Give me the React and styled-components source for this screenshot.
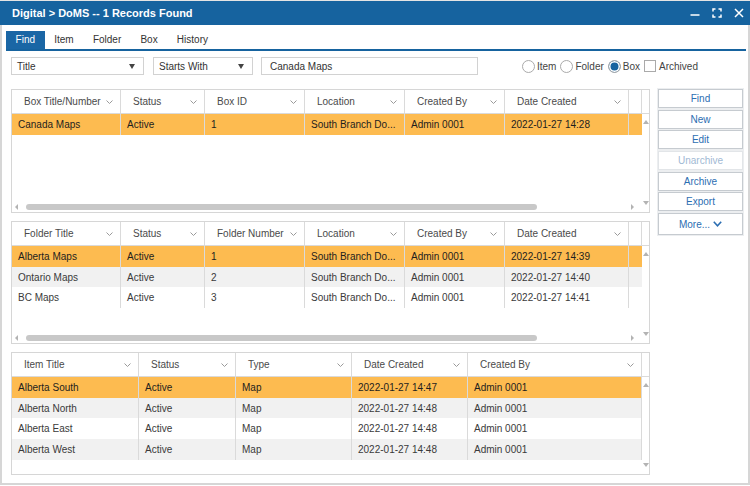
import React from "react";
import styled, { createGlobalStyle } from "styled-components";

const colors = {
	blue: "#16639f",
	tabBlue: "#1a66a5",
	border: "#d6d6d6",
	gridLine: "#dadada",
	highlight: "#fdbb50",
	alt: "#f1f1f1",
	link: "#2c6eb2",
};

const GlobalStyle = createGlobalStyle`
	html, body {
		margin: 0;
		padding: 0;
		background: #fff;
	}
	body {
		font-family: "Liberation Sans", Arial, sans-serif;
		font-size: 10px;
		color: #333;
	}
	* {
		box-sizing: border-box;
	}
`;

const Window = styled.div`
	width: 750px;
	height: 485px;
	display: flex;
	flex-direction: column;
	background: #fff;
`;

const TitleBar = styled.header`
	height: 25px;
	flex: none;
	display: flex;
	align-items: center;
	justify-content: space-between;
	background: ${colors.blue};
	border-top: 1px solid #e4e4e4;
	padding: 0 6px 0 12px;
	color: #fff;
	font-size: 11px;
	font-weight: bold;
`;

const TitleIcons = styled.div`
	display: flex;
	align-items: center;
	gap: 12px;

	svg {
		width: 10px;
		height: 10px;
		stroke: #fff;
		fill: none;
		stroke-width: 1.5;
	}
`;

const Body = styled.div`
	flex: 1;
	display: flex;
	flex-direction: column;
	border: 2px solid ${colors.border};
	border-top: none;
	padding: 0 2px;
`;

const TabBar = styled.nav`
	display: flex;
	margin: 6px 0 0 2px;
	border-bottom: 2px solid ${colors.blue};
`;

const Tab = styled.div`
	height: 18px;
	line-height: 18px;
	padding: 0 9.6px;
	background: ${(p) => (p.$active ? colors.tabBlue : "transparent")};
	color: ${(p) => (p.$active ? "#fff" : "#333")};
`;

const FilterRow = styled.div`
	display: flex;
	align-items: center;
	height: 18px;
	margin: 6px 0 0 7px;
`;

const Select = styled.div`
	width: ${(p) => p.$width}px;
	height: 18px;
	margin-right: ${(p) => p.$gap}px;
	display: flex;
	align-items: center;
	justify-content: space-between;
	padding: 0 8px 0 5px;
	border: 1px solid #d2d2d2;
	color: #333;
`;

const Caret = styled.span`
	width: 0;
	height: 0;
	border-left: 3.5px solid transparent;
	border-right: 3.5px solid transparent;
	border-top: 5px solid #444;
`;

const TextInput = styled.div`
	width: 217px;
	height: 18px;
	display: flex;
	align-items: center;
	padding-left: 8px;
	border: 1px solid #d2d2d2;
	color: #333;
`;

const Options = styled.div`
	display: flex;
	align-items: center;
	margin-left: 44px;
	color: #444;
`;

const Option = styled.label`
	display: flex;
	align-items: center;
	gap: 2px;
	margin-right: 4px;
`;

const Radio = styled.span`
	width: 13px;
	height: 13px;
	border-radius: 50%;
	border: 1px solid #aaa;
	background: ${(p) => (p.$checked ? colors.blue : "#fff")};
	box-shadow: ${(p) => (p.$checked ? "inset 0 0 0 1.5px #fff" : "none")};
`;

const Checkbox = styled.span`
	width: 12px;
	height: 12px;
	border: 1px solid #aaa;
	background: #fff;
	margin-right: 1px;
`;

const Main = styled.div`
	display: flex;
	gap: 8px;
	margin: 14px 0 0 7px;
`;

const Grids = styled.div`
	width: 639px;
	display: flex;
	flex-direction: column;
	gap: 8px;
`;

const GridBox = styled.div`
	height: ${(p) => p.$height}px;
	display: flex;
	flex-direction: column;
	border: 1px solid ${colors.border};
`;

const HeaderRow = styled.div`
	height: 24px;
	flex: none;
	display: flex;
	border-bottom: 1px solid ${colors.gridLine};
`;

const HeaderCell = styled.div`
	width: ${(p) => p.$width}px;
	flex: none;
	display: flex;
	align-items: center;
	justify-content: space-between;
	padding: 0 7px 0 12px;
	border-right: 1px solid ${colors.gridLine};
	color: #4a4a4a;

	svg {
		width: 7px;
		height: 4px;
		stroke: #9a9a9a;
		fill: none;
	}
`;

const Filler = styled.div`
	width: 13px;
	flex: none;
	border-right: ${(p) => (p.$line ? `1px solid ${colors.gridLine}` : "none")};
`;

const GridMain = styled.div`
	flex: 1;
	display: flex;
	min-height: 0;
`;

const GridLeft = styled.div`
	flex: 1;
	display: flex;
	flex-direction: column;
`;

const Rows = styled.div`
	flex: 1;
	overflow: hidden;
`;

const Row = styled.div`
	height: 20.7px;
	display: flex;
	background: ${(p) => (p.$selected ? colors.highlight : p.$alt ? colors.alt : "#fff")};
	color: ${(p) => (p.$selected ? "#1e1e1e" : "#3a3a3a")};
`;

const Cell = styled.div`
	width: ${(p) => p.$width}px;
	flex: none;
	display: flex;
	align-items: center;
	padding: 0 2px 0 6px;
	border-right: 1px solid ${colors.gridLine};
	white-space: nowrap;
`;

const VScroll = styled.div`
	width: 7px;
	flex: none;
	display: flex;
	flex-direction: column;
	align-items: center;
	justify-content: space-between;
	padding: 6px 0 7px;
`;

const Arrow = styled.span`
	width: 0;
	height: 0;
	${(p) =>
		p.$dir === "up"
			? "border-left: 3px solid transparent; border-right: 3px solid transparent; border-bottom: 4px solid #b3b3b3;"
			: p.$dir === "down"
			? "border-left: 3px solid transparent; border-right: 3px solid transparent; border-top: 4px solid #b3b3b3;"
			: p.$dir === "left"
			? "border-top: 3px solid transparent; border-bottom: 3px solid transparent; border-right: 3px solid #b3b3b3;"
			: "border-top: 3px solid transparent; border-bottom: 3px solid transparent; border-left: 3px solid #b3b3b3;"}
`;

const HScroll = styled.div`
	height: 11px;
	flex: none;
	display: flex;
	align-items: center;
	padding: 0 8px 0 3px;
`;

const Thumb = styled.div`
	width: 511px;
	height: 6px;
	margin: 0 auto 0 8px;
	border-radius: 3px;
	background: #c8c8c8;
`;

const Actions = styled.div`
	width: 85px;
	display: flex;
	flex-direction: column;
	gap: 1.7px;
`;

const ActionButton = styled.button`
	height: ${(p) => (p.$tall ? 22 : 19)}px;
	display: flex;
	align-items: center;
	justify-content: center;
	gap: 3px;
	padding: 0;
	margin: 0;
	background: #fff;
	border: 1px solid ${(p) => (p.disabled ? "#e2e5e8" : "#c6cbd0")};
	box-shadow: 0 0 0 1px #eceef0;
	font-family: inherit;
	font-size: 10px;
	color: ${(p) => (p.disabled ? "#9fb9d4" : colors.link)};

	svg {
		width: 9px;
		height: 6px;
		stroke: ${colors.link};
		stroke-width: 1.6;
		fill: none;
	}
`;

const SortIcon = () => (
	<svg viewBox="0 0 7 4">
		<polyline points="0.5,0.5 3.5,3.5 6.5,0.5" />
	</svg>
);

const GridTable = ({ columns, rows, height, filler, hscroll }) => (
	<GridBox $height={height}>
		<HeaderRow>
			{columns.map((c) => (
				<HeaderCell key={c.title} $width={c.width}>
					<span>{c.title}</span>
					<SortIcon />
				</HeaderCell>
			))}
			{filler && <Filler $line />}
		</HeaderRow>
		<GridMain>
			<GridLeft>
				<Rows>
					{rows.map((r, i) => (
						<Row key={i} $selected={i === 0} $alt={i % 2 === 1}>
							{r.map((v, j) => (
								<Cell key={j} $width={columns[j].width}>
									{v}
								</Cell>
							))}
							{filler && <Filler />}
						</Row>
					))}
				</Rows>
				{hscroll && (
					<HScroll>
						<Arrow $dir="left" />
						<Thumb />
						<Arrow $dir="right" />
					</HScroll>
				)}
			</GridLeft>
			<VScroll>
				<Arrow $dir="up" />
				<Arrow $dir="down" />
			</VScroll>
		</GridMain>
	</GridBox>
);

const LOC = "South Branch Do...";

const boxColumns = [
	{ title: "Box Title/Number", width: 109 },
	{ title: "Status", width: 84 },
	{ title: "Box ID", width: 100 },
	{ title: "Location", width: 100 },
	{ title: "Created By", width: 100 },
	{ title: "Date Created", width: 124 },
];

const boxRows = [["Canada Maps", "Active", "1", LOC, "Admin 0001", "2022-01-27 14:28"]];

const folderColumns = [
	{ title: "Folder Title", width: 109 },
	{ title: "Status", width: 84 },
	{ title: "Folder Number", width: 100 },
	{ title: "Location", width: 100 },
	{ title: "Created By", width: 100 },
	{ title: "Date Created", width: 124 },
];

const folderRows = [
	["Alberta Maps", "Active", "1", LOC, "Admin 0001", "2022-01-27 14:39"],
	["Ontario Maps", "Active", "2", LOC, "Admin 0001", "2022-01-27 14:40"],
	["BC Maps", "Active", "3", LOC, "Admin 0001", "2022-01-27 14:41"],
];

const itemColumns = [
	{ title: "Item Title", width: 127 },
	{ title: "Status", width: 97 },
	{ title: "Type", width: 116 },
	{ title: "Date Created", width: 116 },
	{ title: "Created By", width: 174 },
];

const itemRows = [
	["Alberta South", "Active", "Map", "2022-01-27 14:47", "Admin 0001"],
	["Alberta North", "Active", "Map", "2022-01-27 14:48", "Admin 0001"],
	["Alberta East", "Active", "Map", "2022-01-27 14:48", "Admin 0001"],
	["Alberta West", "Active", "Map", "2022-01-27 14:48", "Admin 0001"],
];

const tabs = ["Find", "Item", "Folder", "Box", "History"];
const actions = ["Find", "New", "Edit", "Unarchive", "Archive", "Export"];

const App = () => {
	return (
		<Window>
			<GlobalStyle />
			<TitleBar>
				<span>Digital &gt; DoMS -- 1 Records Found</span>
				<TitleIcons>
					<svg viewBox="0 0 10 10">
						<path d="M0.5 7h9" />
					</svg>
					<svg viewBox="0 0 10 10">
						<path d="M1 3.5V1h2.5M6.5 1H9v2.5M9 6.5V9H6.5M3.5 9H1V6.5" />
					</svg>
					<svg viewBox="0 0 10 10">
						<path d="M1 1l8 8M9 1L1 9" />
					</svg>
				</TitleIcons>
			</TitleBar>
			<Body>
				<TabBar>
					{tabs.map((t) => (
						<Tab key={t} $active={t === "Find"}>
							{t}
						</Tab>
					))}
				</TabBar>
				<FilterRow>
					<Select $width={133} $gap={9}>
						<span>Title</span>
						<Caret />
					</Select>
					<Select $width={100} $gap={8}>
						<span>Starts With</span>
						<Caret />
					</Select>
					<TextInput>Canada Maps</TextInput>
					<Options>
						<Option>
							<Radio />
							Item
						</Option>
						<Option>
							<Radio />
							Folder
						</Option>
						<Option>
							<Radio $checked />
							Box
						</Option>
						<Option>
							<Checkbox />
							Archived
						</Option>
					</Options>
				</FilterRow>
				<Main>
					<Grids>
						<GridTable columns={boxColumns} rows={boxRows} height={124} filler hscroll />
						<GridTable columns={folderColumns} rows={folderRows} height={123} filler hscroll />
						<GridTable columns={itemColumns} rows={itemRows} height={123} />
					</Grids>
					<Actions>
						{actions.map((a) => (
							<ActionButton key={a} disabled={a === "Unarchive"}>
								{a}
							</ActionButton>
						))}
						<ActionButton $tall>
							More...
							<svg viewBox="0 0 9 6">
								<polyline points="0.8,0.8 4.5,4.8 8.2,0.8" />
							</svg>
						</ActionButton>
					</Actions>
				</Main>
			</Body>
		</Window>
	);
};

export default App;
